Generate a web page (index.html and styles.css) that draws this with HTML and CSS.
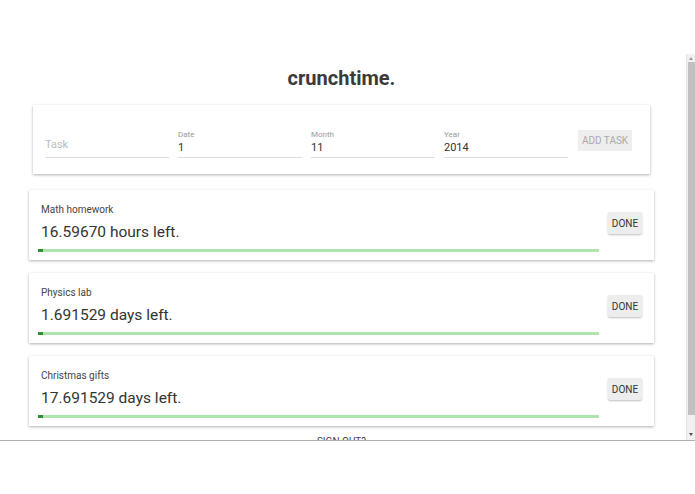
FILE: index.html
```html
<!DOCTYPE html>
<html>
<head>
<meta charset="utf-8">
<link rel="stylesheet" href="styles.css">
</head>
<body>
<div class="top-space"></div>
<div class="frame">
  <div class="content">
    <h1 class="title">crunchtime.</h1>
    <div class="form-card">
      <div class="field">
        <div class="field-label"></div>
        <div class="field-value placeholder">Task</div>
      </div>
      <div class="field">
        <div class="field-label">Date</div>
        <div class="field-value">1</div>
      </div>
      <div class="field">
        <div class="field-label">Month</div>
        <div class="field-value">11</div>
      </div>
      <div class="field">
        <div class="field-label">Year</div>
        <div class="field-value">2014</div>
      </div>
      <button class="add-btn">ADD TASK</button>
    </div>

    <div class="task-card">
      <div class="task-main">
        <div class="task-name">Math homework</div>
        <div class="task-left">16.59670 hours left.</div>
        <div class="bar"><div class="bar-fill" style="width:5px"></div></div>
      </div>
      <button class="done-btn">DONE</button>
    </div>

    <div class="task-card">
      <div class="task-main">
        <div class="task-name">Physics lab</div>
        <div class="task-left">1.691529 days left.</div>
        <div class="bar"><div class="bar-fill" style="width:5px"></div></div>
      </div>
      <button class="done-btn">DONE</button>
    </div>

    <div class="task-card">
      <div class="task-main">
        <div class="task-name">Christmas gifts</div>
        <div class="task-left">17.691529 days left.</div>
        <div class="bar"><div class="bar-fill" style="width:5px"></div></div>
      </div>
      <button class="done-btn">DONE</button>
    </div>

    <div class="sign-out">SIGN OUT?</div>
  </div>
  <div class="scrollbar">
    <div class="arrow arrow-up"></div>
    <div class="thumb"></div>
    <div class="arrow arrow-down"></div>
  </div>
</div>
</body>
</html>
```

FILE: styles.css
```css
* { box-sizing: border-box; }
html, body { margin: 0; padding: 0; background: #fff; }
body {
  width: 695px;
  height: 494px;
  overflow: hidden;
  font-family: Roboto, "Liberation Sans", sans-serif;
  color: #333;
}
.top-space { height: 54px; }
.frame {
  height: 387px;
  display: flex;
  border-bottom: 1px solid #b0b0b0;
  overflow: hidden;
}
.content {
  width: 683px;
  margin-right: 3px;
  flex: none;
  padding-top: 12px;
  display: flex;
  flex-direction: column;
  align-items: center;
  overflow: hidden;
}
.content > * { flex: none; }
.title {
  margin: 0;
  font-size: 20px;
  line-height: 24px;
  font-weight: 700;
  color: #3a3a3a;
}
.form-card {
  margin-top: 15px;
  width: 617px;
  height: 69px;
  padding: 0 18px 0 12px;
  display: flex;
  align-items: center;
  gap: 9px;
  background: #fff;
  box-shadow: 0 1px 3px rgba(0,0,0,0.22), 0 1px 2px rgba(0,0,0,0.10);
}
.field {
  width: 124px;
  flex: none;
  border-bottom: 1px solid #dcdcdc;
  margin-top: 8px;
}
.field-label {
  font-size: 8px;
  line-height: 12px;
  height: 12px;
  color: #999;
}
.field-value {
  font-size: 11px;
  line-height: 14px;
  padding-bottom: 2px;
  color: #333;
}
.field-value.placeholder {
  color: #bbb;
  margin-top: -3px;
  padding-bottom: 5px;
}
.add-btn {
  margin-left: 1px;
  width: 54px;
  height: 21px;
  padding: 0;
  border: none;
  background: #eeeeee;
  color: #aaa;
  font-family: Roboto, "Liberation Sans", sans-serif;
  font-size: 10px;
  margin-top: 2px;
}
.task-card {
  margin-top: 16px;
  width: 625px;
  height: 70px;
  padding: 13px 12px 0 12px;
  display: flex;
  align-items: flex-start;
  background: #fff;
  box-shadow: 0 1px 3px rgba(0,0,0,0.22), 0 1px 2px rgba(0,0,0,0.10);
}
.task-card + .task-card { margin-top: 13px; }
.task-main {
  flex: 1;
  display: flex;
  flex-direction: column;
}
.task-name {
  font-size: 10px;
  line-height: 14px;
  color: #444;
}
.task-left {
  margin-top: 5px;
  font-size: 15.5px;
  line-height: 20px;
  color: #333;
}
.bar {
  margin-top: 7px;
  margin-left: -3px;
  width: 561px;
  height: 3px;
  background: #ade4ad;
}
.bar-fill {
  height: 3px;
  background: #2e8f35;
}
.done-btn {
  margin-top: 9px;
  width: 34px;
  height: 22px;
  padding: 0;
  border: none;
  border-radius: 2px;
  background: #ededed;
  color: #333;
  font-family: Roboto, "Liberation Sans", sans-serif;
  font-size: 10px;
  box-shadow: 0 1px 2px rgba(0,0,0,0.25);
}
.sign-out {
  margin-top: 10px;
  font-size: 10px;
  line-height: 12px;
  color: #444;
}
.scrollbar {
  width: 9px;
  flex: none;
  background: #f1f1f1;
  border-left: 1px solid #e4e4e4;
  display: flex;
  flex-direction: column;
  align-items: center;
  padding: 2px 0 4px 0;
}
.thumb {
  width: 7px;
  flex: 1;
  margin: 2px 0 18px 0;
  background: #c1c1c1;
}
.arrow {
  width: 0;
  height: 0;
  border-left: 2px solid transparent;
  border-right: 2px solid transparent;
}
.arrow-up { border-bottom: 3px solid #999; margin-top: 1px; }
.arrow-down { border-top: 3px solid #505050; }
```
